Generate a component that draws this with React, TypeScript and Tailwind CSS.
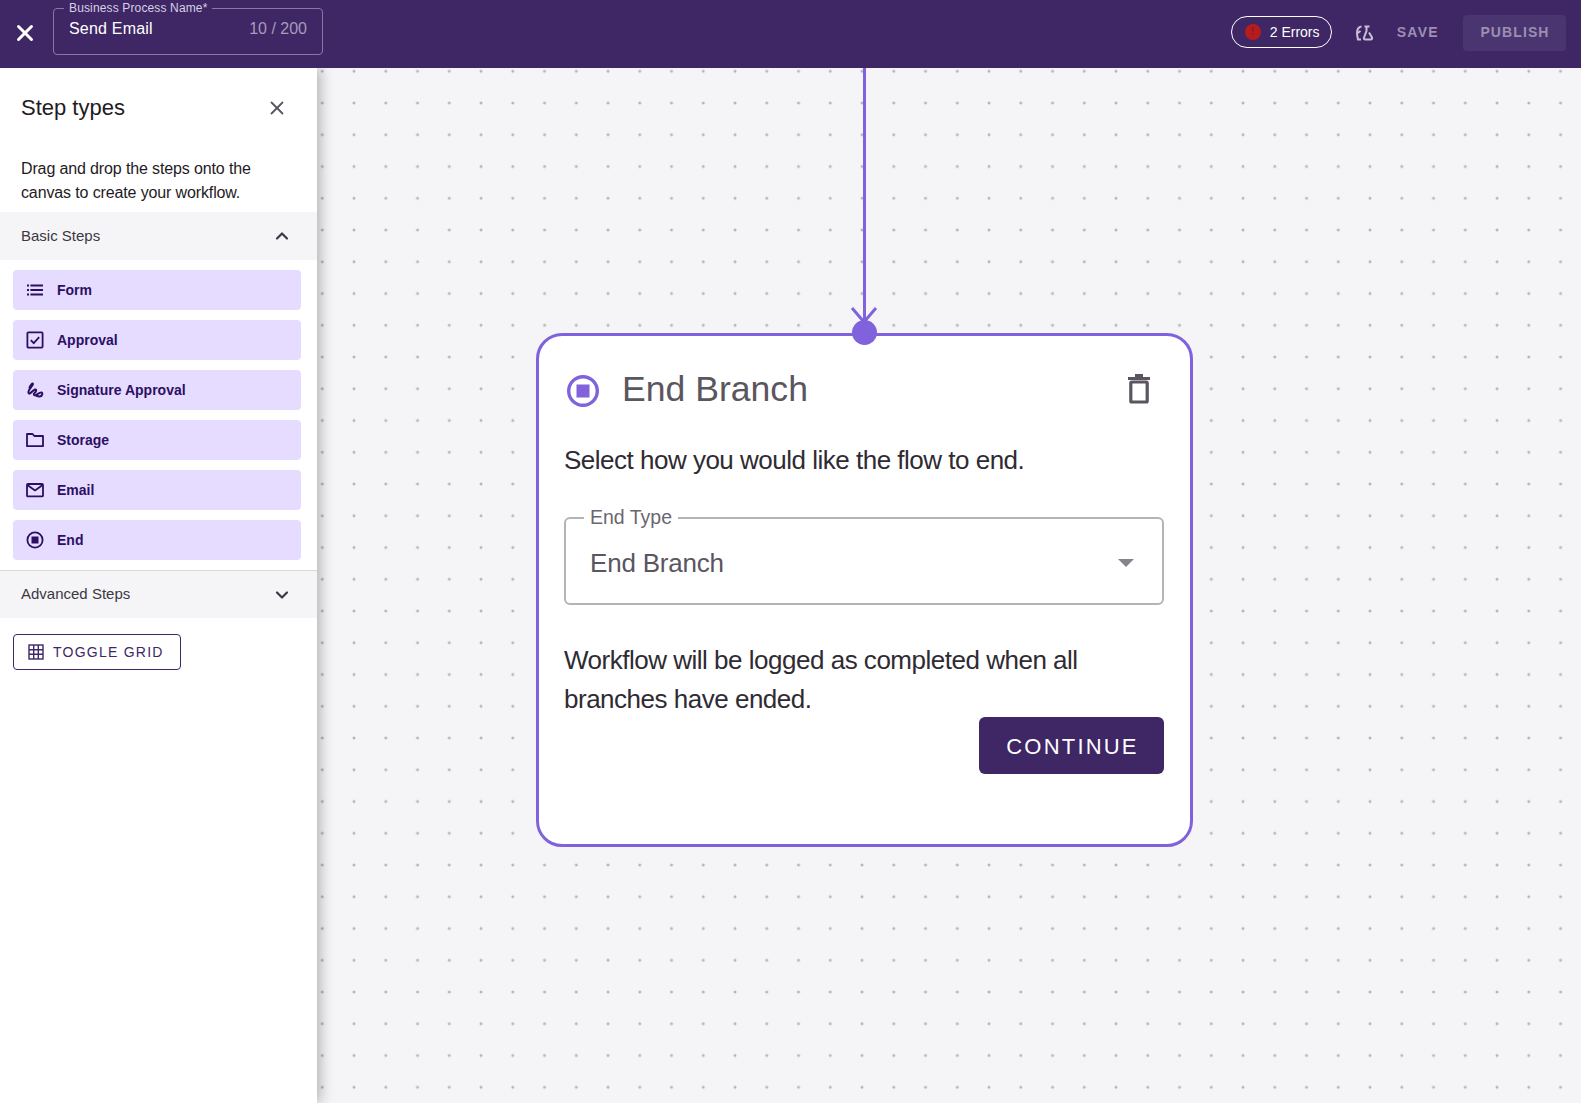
import { ChevronDown, ChevronUp, X } from "lucide-react";
import type { ReactNode } from "react";

const SANS = "font-['Liberation_Sans',Arial,sans-serif]";

function FormIcon() {
  return (
    <svg width="18" height="18" viewBox="0 0 18 18" fill="currentColor">
      <rect x="1" y="3.5" width="2" height="2" />
      <rect x="1" y="8" width="2" height="2" />
      <rect x="1" y="12.5" width="2" height="2" />
      <rect x="4.4" y="3.5" width="12.6" height="2" />
      <rect x="4.4" y="8" width="12.6" height="2" />
      <rect x="4.4" y="12.5" width="12.6" height="2" />
    </svg>
  );
}

function ApprovalIcon() {
  return (
    <svg width="18" height="18" viewBox="0 0 18 18" fill="none" stroke="currentColor" strokeWidth="1.8">
      <rect x="1.4" y="1.4" width="15.2" height="15.2" rx="1" />
      <path d="M4.8 9.2l2.9 2.9 5.5-6" />
    </svg>
  );
}

function SignatureIcon() {
  return (
    <svg width="18" height="18" viewBox="0 0 18 18" fill="none" stroke="currentColor" strokeWidth="2" strokeLinecap="round" strokeLinejoin="round">
      <path d="M3.5 6.5C4.5 4 7 1.5 7 3 7 5 1.5 9 2.5 12 3.5 14.5 7 9 9 8.5 11 8 10 11 8.5 12 7 13 8 15 10 14 12 13 14 11 15.5 11.5 17 12 16.5 15.5 13.5 15.5 12 15.5 11 15 10 14.5" />
    </svg>
  );
}

function FolderIcon() {
  return (
    <svg width="18" height="18" viewBox="0 0 18 18" fill="none" stroke="currentColor" strokeWidth="1.8" strokeLinejoin="round">
      <path d="M1 3h5.6l1.7 2H17v10.2H1z" />
    </svg>
  );
}

function MailIcon() {
  return (
    <svg width="18" height="18" viewBox="0 0 18 18" fill="none" stroke="currentColor" strokeWidth="1.8" strokeLinejoin="round">
      <rect x="1" y="3" width="16" height="12.4" rx="1" />
      <path d="M1.4 4l7.6 5.4L16.6 4" />
    </svg>
  );
}

function EndIcon() {
  return (
    <svg width="18" height="18" viewBox="0 0 18 18" fill="none">
      <circle cx="9" cy="9" r="7.6" stroke="currentColor" strokeWidth="1.8" />
      <rect x="5.5" y="5.5" width="7" height="7" fill="currentColor" />
    </svg>
  );
}

const steps: { label: string; icon: ReactNode }[] = [
  { label: "Form", icon: <FormIcon /> },
  { label: "Approval", icon: <ApprovalIcon /> },
  { label: "Signature Approval", icon: <SignatureIcon /> },
  { label: "Storage", icon: <FolderIcon /> },
  { label: "Email", icon: <MailIcon /> },
  { label: "End", icon: <EndIcon /> },
];

export default function App() {
  return (
    <div className={`flex h-screen flex-col overflow-hidden bg-[#f5f5f7] ${SANS}`}>
      {/* Top bar */}
      <header className="relative z-20 flex h-[68px] shrink-0 items-center bg-[#3e2764] pb-[3px] pr-[15px] text-white">
        <button className="ml-[16px] flex h-[18px] w-[18px] items-center justify-center">
          <X size={26} strokeWidth={2.7} className="shrink-0" />
        </button>
        <div className="relative mb-[3px] ml-[19px] flex h-[47px] w-[270px] items-start justify-between rounded border border-[#8a77a6] px-[15px] pt-[10px]">
          <span className="absolute -top-[9px] left-[10px] bg-[#3e2764] px-[5px] text-[12px] leading-[16px] tracking-[0.14px] text-[#d8d0e4]">
            Business Process Name*
          </span>
          <span className="text-[16px] leading-[20px] tracking-[0.2px]">Send Email</span>
          <span className="text-[16px] leading-[20px] text-[#a89bbd]">10 / 200</span>
        </div>
        <div className="ml-auto flex items-center">
          <div className="mb-[2px] flex h-[32px] w-[101px] items-center rounded-full border border-white pl-[13px]">
            <span className="flex h-4 w-4 items-center justify-center rounded-full bg-[#b71c1c] text-[10px] font-bold leading-none text-[#8f1515]">
              !
            </span>
            <span className="ml-[9px] text-[14px] leading-[18px]">2 Errors</span>
          </div>
          <svg className="ml-[23px]" width="18" height="16" viewBox="0 0 18 16" fill="none" stroke="#c9c0d8" strokeWidth="2">
            <path d="M6.5 1.5C3 2 2 5 2 8c0 2 .5 4 1 6.5h3M2 8.5L5.5 6" />
            <path d="M9.5 1.5h5M11.5 1.5v4.5L9 12.5c-.4 1 .2 2 1.2 2h5.6c1 0 1.6-1 1.2-2L14 7.5" />
          </svg>
          <span className="ml-[24px] text-[14px] font-bold tracking-[1.3px] text-[#9c8fb3]">SAVE</span>
          <button className="ml-[24px] flex h-[36px] w-[103px] items-center justify-center rounded bg-[#4a3570] pl-[1px] text-[14px] font-bold tracking-[1.1px] text-[#9c8fb3]">
            PUBLISH
          </button>
        </div>
      </header>

      <div className="flex min-h-0 flex-1">
        {/* Step palette */}
        <aside className="relative z-10 flex w-[317px] shrink-0 flex-col bg-white shadow-[2px_0_14px_rgba(0,0,0,0.32)]">
          <div className="flex h-[80px] items-center justify-between pl-[21px] pr-[29px]">
            <h2 className="text-[22px] font-normal leading-[28px] text-[#1f1b24]">Step types</h2>
            <X size={22} strokeWidth={2} className="text-[#5b5560]" />
          </div>
          <p className="px-[21px] pt-[9px] text-[16px] leading-[24px] tracking-[-0.13px] text-[#1f1b24]">
            Drag and drop the steps onto the canvas to create your workflow.
          </p>
          <div className="mt-[7px] flex h-[48px] items-center justify-between bg-[#f5f5f7] pl-[21px] pr-[25px] text-[15px] text-[#3c3843]">
            <span>Basic Steps</span>
            <ChevronUp size={20} strokeWidth={2.6} />
          </div>
          <div className="flex flex-col gap-[10px] px-[13px] pb-[10px] pr-[16px] pt-[10px]">
            {steps.map((s) => (
              <div
                key={s.label}
                className="flex h-[40px] items-center gap-[13px] rounded bg-[#e6dcff] pl-[13px] text-[14px] font-bold text-[#2c0f63]"
              >
                {s.icon}
                <span>{s.label}</span>
              </div>
            ))}
          </div>
          <div className="flex h-[48px] items-center justify-between border-t border-[#d9d9dc] bg-[#f5f5f7] pl-[21px] pr-[25px] text-[15px] text-[#3c3843]">
            <span>Advanced Steps</span>
            <ChevronDown size={20} strokeWidth={2.6} />
          </div>
          <button className="ml-[13px] mt-[16px] flex h-[36px] w-[168px] items-center gap-[9px] rounded border border-[#3e2764] pl-[14px] text-[14px] tracking-[1.25px] text-[#3e2764]">
            <svg width="16" height="16" viewBox="0 0 16 16" fill="none" stroke="currentColor" strokeWidth="1.4">
              <rect x="1" y="1" width="14" height="14" />
              <path d="M5.7 1v14M10.3 1v14M1 5.7h14M1 10.3h14" />
            </svg>
            TOGGLE GRID
          </button>
        </aside>

        {/* Canvas */}
        <main className="relative min-w-0 flex-1 bg-[#f5f5f7] bg-[radial-gradient(circle,#b4b4ba_1.5px,transparent_1.6px)] bg-[size:31.75px_31.75px] bg-[position:-10.6px_-12.6px] pl-[219px]">
          <div className="flex w-[657px] flex-col items-center">
            <div className="relative mr-[1px] h-[265px] w-[3px] bg-[#7f62dc]">
              <svg className="absolute left-1/2 top-[238px] -translate-x-1/2" width="28" height="18" viewBox="0 0 28 18" fill="none" stroke="#7f62dc" strokeWidth="3">
                <path d="M2 2l12 14L26 2" />
              </svg>
            </div>
            <section className="relative flex h-[514px] w-full flex-col rounded-[26px] border-[3px] border-[#7f62dc] bg-white pl-[25px] pr-[26px]">
              <span className="absolute -top-[16px] left-[313px] h-[25px] w-[25px] rounded-full bg-[#7f62dc]" />
              <div className="flex items-start pt-[31px]">
                <svg className="ml-[3px] mt-[8px]" width="32" height="32" viewBox="0 0 32 32" fill="none">
                  <circle cx="16" cy="16" r="14.3" stroke="#7f62dc" strokeWidth="3.4" />
                  <rect x="9.5" y="9.5" width="13" height="13" fill="#7f62dc" />
                </svg>
                <h1 className="ml-[23px] text-[35.6px] font-normal leading-[44px] text-[#5b5560]">End Branch</h1>
                <svg className="ml-auto mr-[13px] mt-[7px]" width="24" height="30" viewBox="0 0 24 30" fill="none" stroke="#5b5560" strokeWidth="3.2">
                  <path d="M1 4.5h22M8 1.5h8" />
                  <rect x="3.8" y="8" width="16.4" height="20" rx="1" />
                </svg>
              </div>
              <p className="mt-[30px] text-[26px] leading-[38px] tracking-[-0.5px] text-[#2f2b33]">
                Select how you would like the flow to end.
              </p>
              <div className="relative mt-[38px] flex h-[88px] items-center justify-between rounded-[6px] border-2 border-[#b5b3b8] pl-[24px] pr-[28px] pt-[3px]">
                <span className="absolute -top-[15px] left-[18px] bg-white px-[6px] text-[19.5px] leading-[26px] text-[#6b6670]">
                  End Type
                </span>
                <span className="text-[26px] leading-[32px] tracking-[-0.2px] text-[#5b5560]">End Branch</span>
                <span className="h-0 w-0 border-x-[8px] border-t-[8px] border-x-transparent border-t-[#86838a]" />
              </div>
              <p className="mt-[36px] w-[560px] text-[26px] leading-[39px] tracking-[-0.49px] text-[#2f2b33]">
                Workflow will be logged as completed when all branches have ended.
              </p>
              <div className="mt-[-2px] flex justify-end">
                <button className="flex h-[57px] w-[185px] items-center justify-center rounded-[6px] bg-[#3e2764] pl-[2px] pt-[2px] text-[22px] tracking-[2.2px] text-white">
                  CONTINUE
                </button>
              </div>
            </section>
          </div>
        </main>
      </div>
    </div>
  );
}
